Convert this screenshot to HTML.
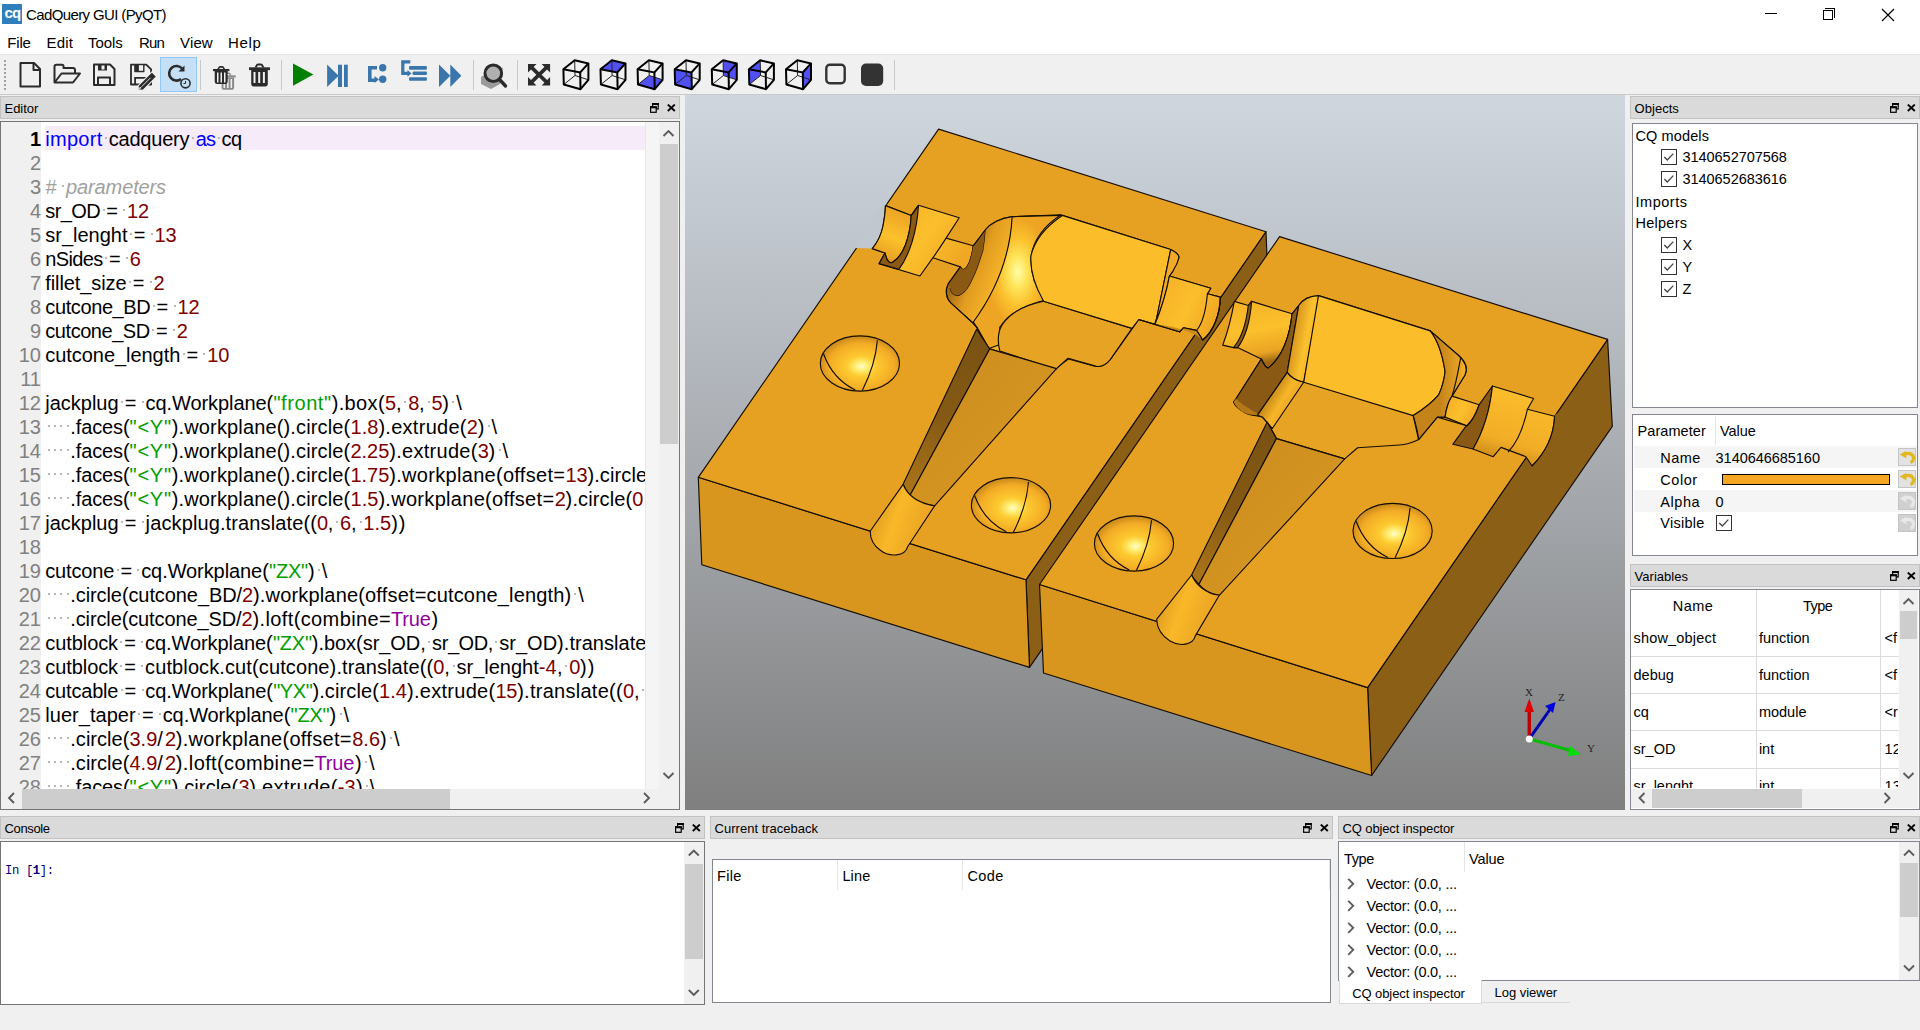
<!DOCTYPE html><html><head><meta charset="utf-8"><style>
*{margin:0;padding:0;box-sizing:border-box}
html,body{width:1920px;height:1030px;overflow:hidden;background:#f0f0f0;font-family:"Liberation Sans",sans-serif;color:#000}
.a{position:absolute}
.t{position:absolute;white-space:pre;font-size:14px;line-height:16px}
.dt{position:absolute;background:#dadada;border:1px solid #c2c2c2}
.dt .lbl{position:absolute;left:4px;top:2px;font-size:14px;white-space:pre}
.box{position:absolute;background:#fff;border:1px solid #828790}
.code{position:absolute;white-space:pre;font-size:20px;line-height:24px}
.ln{position:absolute;width:40px;text-align:right;font-size:20px;line-height:24px;color:#808080;left:0}
.kw{color:#0000ff}.num{color:#7f0000}.str{color:#00a000}.cm{color:#a0a0a0;font-style:italic}.tru{color:#9000a0}
.ws{color:#c8c8c8}
</style></head><body><div class="a" style="left:0;top:0;width:1920px;height:55px;background:#fff"></div><div class="a" style="left:0;top:54px;width:1920px;height:1px;background:#e3e3e3"></div><div class="a" style="left:2px;top:4px;width:20px;height:20px;background:#2f7fbd"></div><div class="t" style="left:4.5px;top:4px;font-size:15px;line-height:18px;font-weight:bold;color:#fff;letter-spacing:-0.8px">cq</div><div class="t" style="left:26.1px;top:7.3px;font-size:15px;line-height:15px;letter-spacing:-0.63px">CadQuery GUI (PyQT)</div><div class="a" style="left:1765px;top:13px;width:12px;height:1px;background:#000"></div><div class="a" style="left:1823px;top:10px;width:10px;height:10px;border:1px solid #000"></div><div class="a" style="left:1825px;top:8px;width:10px;height:10px;border-top:1px solid #000;border-right:1px solid #000"></div><svg class="a" style="left:1881px;top:8px" width="14" height="14"><path d="M1 1L13 13M13 1L1 13" stroke="#000" stroke-width="1.2"/></svg><div class="t" style="left:7.3px;top:35.1px;font-size:15px;line-height:15px;letter-spacing:-0.19px">File</div><div class="t" style="left:46.6px;top:35.1px;font-size:15px;line-height:15px;letter-spacing:0.17px">Edit</div><div class="t" style="left:88.1px;top:35.1px;font-size:15px;line-height:15px;letter-spacing:-0.08px">Tools</div><div class="t" style="left:139.1px;top:35.1px;font-size:15px;line-height:15px;letter-spacing:-0.83px">Run</div><div class="t" style="left:180.1px;top:35.1px;font-size:15px;line-height:15px;letter-spacing:0.11px">View</div><div class="t" style="left:228.1px;top:35.1px;font-size:15px;line-height:15px;letter-spacing:0.67px">Help</div><div class="a" style="left:0;top:94px;width:1920px;height:1px;background:#c9c9c9"></div><svg class="a" style="left:0;top:0" width="920" height="95"><rect x="4" y="60" width="2" height="2" fill="#a0a0a0"/><rect x="4" y="64" width="2" height="2" fill="#a0a0a0"/><rect x="4" y="68" width="2" height="2" fill="#a0a0a0"/><rect x="4" y="72" width="2" height="2" fill="#a0a0a0"/><rect x="4" y="76" width="2" height="2" fill="#a0a0a0"/><rect x="4" y="80" width="2" height="2" fill="#a0a0a0"/><rect x="4" y="84" width="2" height="2" fill="#a0a0a0"/><rect x="4" y="88" width="2" height="2" fill="#a0a0a0"/><rect x="160.5" y="57.5" width="36" height="34" fill="#c4dff6" stroke="#90c8f6" stroke-width="1"/><path d="M20.5,63 H34 L40,69 V86.5 H20.5 Z" stroke="#2b2b2b" stroke-width="2" fill="none" stroke-linejoin="round"/><path d="M33.5,63 V70 H40" stroke="#2b2b2b" stroke-width="2" fill="none" stroke-linejoin="round"/><path d="M54.5,82 V66.5 Q54.5,64.8 56.5,64.8 H62 Q63.5,64.8 63.5,66.5 V68 H73 Q75,68 75,70 V73.5" stroke="#2b2b2b" stroke-width="2" fill="none" stroke-linejoin="round"/><path d="M54.5,82.5 L61.5,73.5 H80 L73,82.5 Z" stroke="#2b2b2b" stroke-width="2" fill="none" stroke-linejoin="round"/><path d="M94,64.5 H110 L114.5,69 V85 H94 Z" stroke="#2b2b2b" stroke-width="2" fill="none" stroke-linejoin="round"/><rect x="98" y="64.5" width="9" height="6" fill="#2b2b2b"/><rect x="101.5" y="65.5" width="3" height="4" fill="#f0f0f0"/><path d="M98,85 V77.5 H110 V85" stroke="#2b2b2b" stroke-width="2" fill="none" stroke-linejoin="round"/><path d="M131,64.6 H146.3 L151.1,69.4 V84.5 H131 Z" stroke="#2b2b2b" stroke-width="1.8" fill="none" stroke-linejoin="round"/><rect x="134.2" y="64" width="10.3" height="8.3" rx="0.8" fill="#2b2b2b"/><rect x="138.9" y="65.2" width="4.2" height="5.6" fill="#f0f0f0"/><path d="M135.1,84.5 V77.8 H150" stroke="#2b2b2b" stroke-width="1.8" fill="none"/><path d="M138.2,89.8 L138.2,85.6 L151.9,71.9 L156.5,76.7 L142.9,90.3 Z" fill="#2b2b2b" stroke="#f0f0f0" stroke-width="1.1" stroke-linejoin="round"/><path d="M141.5,86.8 L150.5,77.8" stroke="#f0f0f0" stroke-width="0.9"/><path d="M139.3,88.8 L140.8,87.3" stroke="#f0f0f0" stroke-width="1.4"/><path d="M182,68.5 A7.3,7.3 0 1 0 181,79" stroke="#2b2b2b" stroke-width="2.6" fill="none"/><path d="M184.5,65.5 V71.5 H178.5 Z" fill="#2b2b2b"/><circle cx="185.5" cy="83.3" r="4.6" fill="#c4dff6" stroke="#2b2b2b" stroke-width="1.6"/><path d="M185.5,81 V83.5 H183.5" stroke="#2b2b2b" stroke-width="1" fill="none"/><rect x="200.0" y="60" width="1" height="30" fill="#c8c8c8"/><rect x="281.0" y="60" width="1" height="30" fill="#c8c8c8"/><rect x="473.0" y="60" width="1" height="30" fill="#c8c8c8"/><rect x="517.0" y="60" width="1" height="30" fill="#c8c8c8"/><rect x="894.0" y="60" width="1" height="30" fill="#c8c8c8"/><g transform="translate(220,72.5) scale(0.75)" fill="#8a8a8a"><path d="M0,3.8 H21 V6.6 H0 Z"/><path d="M5.5,4 L7.2,1 Q7.8,0 9.3,0 H11.7 Q13.2,0 13.8,1 L15.5,4 H13.2 L12.2,2.1 H8.8 L7.8,4 Z"/><path d="M2.2,6.5 H18.8 V20.3 Q18.8,23 16.2,23 H4.8 Q2.2,23 2.2,20.3 Z"/></g><g fill="#f0f0f0"><rect x="223.5" y="79" width="1.6" height="9"/><rect x="227" y="79" width="1.6" height="9"/><rect x="230.5" y="79" width="1.6" height="9"/></g><g transform="translate(213,66) scale(0.78)" fill="#2b2b2b"><path d="M0,3.8 H21 V6.6 H0 Z"/><path d="M5.5,4 L7.2,1 Q7.8,0 9.3,0 H11.7 Q13.2,0 13.8,1 L15.5,4 H13.2 L12.2,2.1 H8.8 L7.8,4 Z"/><path d="M2.2,6.5 H18.8 V20.3 Q18.8,23 16.2,23 H4.8 Q2.2,23 2.2,20.3 Z"/></g><g fill="#f0f0f0"><rect x="217" y="72.5" width="1.5" height="10"/><rect x="220.5" y="72.5" width="1.5" height="10"/><rect x="224" y="72.5" width="1.5" height="10"/></g><g transform="translate(249,63.5) scale(1.0)" fill="#2b2b2b"><path d="M0,3.8 H21 V6.6 H0 Z"/><path d="M5.5,4 L7.2,1 Q7.8,0 9.3,0 H11.7 Q13.2,0 13.8,1 L15.5,4 H13.2 L12.2,2.1 H8.8 L7.8,4 Z"/><path d="M2.2,6.5 H18.8 V20.3 Q18.8,23 16.2,23 H4.8 Q2.2,23 2.2,20.3 Z"/></g><g fill="#f0f0f0"><rect x="253.5" y="72" width="2" height="11"/><rect x="258.2" y="72" width="2" height="11"/><rect x="262.9" y="72" width="2" height="11"/></g><path d="M293,63.4 V85.8 L313.4,74.6 Z" fill="#008000"/><path d="M327.1,64.6 V87 L338.6,75.8 Z" fill="#3a76ab"/><rect x="338" y="64.7" width="4" height="22.3" fill="#3a76ab"/><rect x="344" y="64.7" width="3.8" height="22.3" fill="#3a76ab"/><path d="M377,67.8 H369.8 V80.2 H375" stroke="#3a76ab" stroke-width="3.6" fill="none"/><path d="M374.5,76 L379,79.5 L374.5,83 Z" fill="#3a76ab"/><circle cx="382.7" cy="67.7" r="3.7" fill="#3a76ab"/><circle cx="382.7" cy="79.2" r="3.7" fill="#3a76ab"/><path d="M410.3,61.8 H402.8 V73.4 H408" stroke="#3a76ab" stroke-width="3.2" fill="none"/><path d="M407.5,70 L411.5,73.4 L407.5,76.8 Z" fill="#3a76ab"/><rect x="409" y="66.1" width="17.9" height="3.6" rx="1" fill="#3a76ab"/><rect x="412.6" y="71.5" width="14.3" height="3.4" rx="1" fill="#3a76ab"/><rect x="409" y="77.2" width="17.9" height="3.5" rx="1" fill="#3a76ab"/><path d="M439,64.5 V86.9 L450.3,75.7 Z M450.3,64.5 V86.9 L461.4,75.7 Z" fill="#3a76ab"/><path d="M481,77 L489,72 L500,76 V84 L491,89 L481,84 Z" fill="#9a9a9a"/><path d="M487,68 L495,64 L503,68 V77 L495,81 L487,77 Z" fill="#b0b0b0"/><circle cx="493.3" cy="73.3" r="8.3" stroke="#2b2b2b" stroke-width="3" fill="none"/><path d="M499.5,79.5 L505.5,86" stroke="#2b2b2b" stroke-width="3.4" stroke-linecap="round"/><g fill="#2b2b2b"><path d="M528,63.9 H536.5 L528,72.4 Z M550.1,63.9 H541.6 L550.1,72.4 Z M528,85.6 H536.5 L528,77.1 Z M550.1,85.6 H541.6 L550.1,77.1 Z"/></g><path d="M531,66.9 L547.1,82.6 M547.1,66.9 L531,82.6" stroke="#2b2b2b" stroke-width="3.6"/><line x1="574.7" y1="60.3" x2="575.0" y2="75.5" stroke="#222" stroke-width="1"/><line x1="575.0" y1="75.5" x2="563.8" y2="84.5" stroke="#222" stroke-width="1"/><line x1="575.0" y1="75.5" x2="588.4" y2="79.8" stroke="#222" stroke-width="1"/><polygon points="574.7,60.3 588.4,63.4 588.4,79.8 580.5,89.2 563.8,84.5 563.4,69.3" fill="none" stroke="#000" stroke-width="2" stroke-linejoin="round"/><polyline points="563.4,69.3 580.2,72.4 588.4,63.4" fill="none" stroke="#000" stroke-width="2"/><line x1="580.2" y1="72.4" x2="580.5" y2="89.2" stroke="#000" stroke-width="2"/><polygon points="611.8,60.3 625.5,63.4 617.3,72.4 600.5,69.3" fill="#5050f5"/><line x1="611.8" y1="60.3" x2="612.1" y2="75.5" stroke="#222" stroke-width="1"/><line x1="612.1" y1="75.5" x2="600.9" y2="84.5" stroke="#222" stroke-width="1"/><line x1="612.1" y1="75.5" x2="625.5" y2="79.8" stroke="#222" stroke-width="1"/><polygon points="611.8,60.3 625.5,63.4 625.5,79.8 617.6,89.2 600.9,84.5 600.5,69.3" fill="none" stroke="#000" stroke-width="2" stroke-linejoin="round"/><polyline points="600.5,69.3 617.3,72.4 625.5,63.4" fill="none" stroke="#000" stroke-width="2"/><line x1="617.3" y1="72.4" x2="617.6" y2="89.2" stroke="#000" stroke-width="2"/><polygon points="649.2,75.5 662.6,79.8 654.7,89.2 638.0,84.5" fill="#5050f5"/><line x1="648.9" y1="60.3" x2="649.2" y2="75.5" stroke="#222" stroke-width="1"/><line x1="649.2" y1="75.5" x2="638.0" y2="84.5" stroke="#222" stroke-width="1"/><line x1="649.2" y1="75.5" x2="662.6" y2="79.8" stroke="#222" stroke-width="1"/><polygon points="648.9,60.3 662.6,63.4 662.6,79.8 654.7,89.2 638.0,84.5 637.6,69.3" fill="none" stroke="#000" stroke-width="2" stroke-linejoin="round"/><polyline points="637.6,69.3 654.4,72.4 662.6,63.4" fill="none" stroke="#000" stroke-width="2"/><line x1="654.4" y1="72.4" x2="654.7" y2="89.2" stroke="#000" stroke-width="2"/><polygon points="674.7,69.3 691.5,72.4 691.8,89.2 675.1,84.5" fill="#5050f5"/><line x1="686.0" y1="60.3" x2="686.3" y2="75.5" stroke="#222" stroke-width="1"/><line x1="686.3" y1="75.5" x2="675.1" y2="84.5" stroke="#222" stroke-width="1"/><line x1="686.3" y1="75.5" x2="699.7" y2="79.8" stroke="#222" stroke-width="1"/><polygon points="686.0,60.3 699.7,63.4 699.7,79.8 691.8,89.2 675.1,84.5 674.7,69.3" fill="none" stroke="#000" stroke-width="2" stroke-linejoin="round"/><polyline points="674.7,69.3 691.5,72.4 699.7,63.4" fill="none" stroke="#000" stroke-width="2"/><line x1="691.5" y1="72.4" x2="691.8" y2="89.2" stroke="#000" stroke-width="2"/><polygon points="723.1,60.3 736.8,63.4 736.8,79.8 723.4,75.5" fill="#5050f5"/><line x1="723.1" y1="60.3" x2="723.4" y2="75.5" stroke="#222" stroke-width="1"/><line x1="723.4" y1="75.5" x2="712.2" y2="84.5" stroke="#222" stroke-width="1"/><line x1="723.4" y1="75.5" x2="736.8" y2="79.8" stroke="#222" stroke-width="1"/><polygon points="723.1,60.3 736.8,63.4 736.8,79.8 728.9,89.2 712.2,84.5 711.8,69.3" fill="none" stroke="#000" stroke-width="2" stroke-linejoin="round"/><polyline points="711.8,69.3 728.6,72.4 736.8,63.4" fill="none" stroke="#000" stroke-width="2"/><line x1="728.6" y1="72.4" x2="728.9" y2="89.2" stroke="#000" stroke-width="2"/><polygon points="748.9,69.3 760.2,60.3 760.5,75.5 749.3,84.5" fill="#5050f5"/><line x1="760.2" y1="60.3" x2="760.5" y2="75.5" stroke="#222" stroke-width="1"/><line x1="760.5" y1="75.5" x2="749.3" y2="84.5" stroke="#222" stroke-width="1"/><line x1="760.5" y1="75.5" x2="773.9" y2="79.8" stroke="#222" stroke-width="1"/><polygon points="760.2,60.3 773.9,63.4 773.9,79.8 766.0,89.2 749.3,84.5 748.9,69.3" fill="none" stroke="#000" stroke-width="2" stroke-linejoin="round"/><polyline points="748.9,69.3 765.7,72.4 773.9,63.4" fill="none" stroke="#000" stroke-width="2"/><line x1="765.7" y1="72.4" x2="766.0" y2="89.2" stroke="#000" stroke-width="2"/><polygon points="802.8,72.4 811.0,63.4 811.0,79.8 803.1,89.2" fill="#5050f5"/><line x1="797.3" y1="60.3" x2="797.6" y2="75.5" stroke="#222" stroke-width="1"/><line x1="797.6" y1="75.5" x2="786.4" y2="84.5" stroke="#222" stroke-width="1"/><line x1="797.6" y1="75.5" x2="811.0" y2="79.8" stroke="#222" stroke-width="1"/><polygon points="797.3,60.3 811.0,63.4 811.0,79.8 803.1,89.2 786.4,84.5 786.0,69.3" fill="none" stroke="#000" stroke-width="2" stroke-linejoin="round"/><polyline points="786.0,69.3 802.8,72.4 811.0,63.4" fill="none" stroke="#000" stroke-width="2"/><line x1="802.8" y1="72.4" x2="803.1" y2="89.2" stroke="#000" stroke-width="2"/><rect x="826.3" y="64.8" width="18.4" height="18.4" rx="3.5" fill="none" stroke="#333" stroke-width="2.4"/><rect x="861" y="63.5" width="22.2" height="22.5" rx="5" fill="#333"/></svg><div class="dt" style="left:0px;top:96px;width:680px;height:23px"></div><div class="t" style="left:4.6px;top:102.0px;font-size:13px;line-height:13px;letter-spacing:-0.06px">Editor</div><svg class="a" style="left:650px;top:102.5px" width="9" height="10"><rect x="2.6" y="0.6" width="5.6" height="5.4" fill="none" stroke="#000" stroke-width="1.2"/><rect x="2" y="0" width="6.8" height="2" fill="#000"/><rect x="0.6" y="3.9" width="5.6" height="5.4" fill="#dadada" stroke="#000" stroke-width="1.2"/><rect x="0" y="3.3" width="6.8" height="2" fill="#000"/></svg><svg class="a" style="left:666.6px;top:103.6px" width="9" height="8"><path d="M0.8,0.6 L7.8,7 M7.8,0.6 L0.8,7" stroke="#000" stroke-width="1.9"/></svg><div class="box" style="left:0;top:121px;width:680px;height:689px;overflow:hidden;border-color:#747474"><div class="a" style="left:0;top:0;width:40px;height:667px;background:#f0f0f0"></div><div class="a" style="left:44px;top:4px;width:600px;height:24px;background:#f6ebf8"></div><div class="ln" style="top:5px;color:#000;font-weight:bold">1</div><div class="code" style="left:44.3px;top:5px;color:#0000ff;letter-spacing:0.27px">import</div><div class="a" style="left:103.9px;top:15px;width:2px;height:2px;background:#b8b8b8"></div><div class="code" style="left:107.7px;top:5px;color:#000;letter-spacing:-0.20px">cadquery</div><div class="a" style="left:190.8px;top:15px;width:2px;height:2px;background:#b8b8b8"></div><div class="code" style="left:194.7px;top:5px;color:#0000ff;letter-spacing:-0.85px">as</div><div class="a" style="left:216.5px;top:15px;width:2px;height:2px;background:#b8b8b8"></div><div class="code" style="left:220.4px;top:5px;color:#000;letter-spacing:-0.42px">cq</div><div class="ln" style="top:29px;">2</div><div class="ln" style="top:53px;">3</div><div class="code" style="left:44.3px;top:53px;color:#a0a0a0;letter-spacing:3.44px;font-style:italic">#</div><div class="a" style="left:61.3px;top:63px;width:2px;height:2px;background:#b8b8b8"></div><div class="code" style="left:65.1px;top:53px;color:#a0a0a0;letter-spacing:-0.13px;font-style:italic">parameters</div><div class="ln" style="top:77px;">4</div><div class="code" style="left:44.3px;top:77px;color:#000;letter-spacing:-0.60px">sr_OD</div><div class="a" style="left:101.5px;top:87px;width:2px;height:2px;background:#b8b8b8"></div><div class="code" style="left:105.3px;top:77px;color:#000;letter-spacing:2.88px">=</div><div class="a" style="left:122.3px;top:87px;width:2px;height:2px;background:#b8b8b8"></div><div class="code" style="left:126.1px;top:77px;color:#7f0000;letter-spacing:-0.20px">12</div><div class="ln" style="top:101px;">5</div><div class="code" style="left:44.3px;top:101px;color:#000;letter-spacing:-0.01px">sr_lenght</div><div class="a" style="left:128.9px;top:111px;width:2px;height:2px;background:#b8b8b8"></div><div class="code" style="left:132.8px;top:101px;color:#000;letter-spacing:2.88px">=</div><div class="a" style="left:149.7px;top:111px;width:2px;height:2px;background:#b8b8b8"></div><div class="code" style="left:153.6px;top:101px;color:#7f0000;letter-spacing:-0.20px">13</div><div class="ln" style="top:125px;">6</div><div class="code" style="left:44.3px;top:125px;color:#000;letter-spacing:-0.63px">nSides</div><div class="a" style="left:104.1px;top:135px;width:2px;height:2px;background:#b8b8b8"></div><div class="code" style="left:107.9px;top:125px;color:#000;letter-spacing:2.88px">=</div><div class="a" style="left:124.9px;top:135px;width:2px;height:2px;background:#b8b8b8"></div><div class="code" style="left:128.8px;top:125px;color:#7f0000;letter-spacing:-0.20px">6</div><div class="ln" style="top:149px;">7</div><div class="code" style="left:44.3px;top:149px;color:#000;letter-spacing:-0.10px">fillet_size</div><div class="a" style="left:127.8px;top:159px;width:2px;height:2px;background:#b8b8b8"></div><div class="code" style="left:131.7px;top:149px;color:#000;letter-spacing:2.88px">=</div><div class="a" style="left:148.6px;top:159px;width:2px;height:2px;background:#b8b8b8"></div><div class="code" style="left:152.5px;top:149px;color:#7f0000;letter-spacing:-0.20px">2</div><div class="ln" style="top:173px;">8</div><div class="code" style="left:44.3px;top:173px;color:#000;letter-spacing:-0.39px">cutcone_BD</div><div class="a" style="left:151.8px;top:183px;width:2px;height:2px;background:#b8b8b8"></div><div class="code" style="left:155.6px;top:173px;color:#000;letter-spacing:2.88px">=</div><div class="a" style="left:172.6px;top:183px;width:2px;height:2px;background:#b8b8b8"></div><div class="code" style="left:176.5px;top:173px;color:#7f0000;letter-spacing:-0.20px">12</div><div class="ln" style="top:197px;">9</div><div class="code" style="left:44.3px;top:197px;color:#000;letter-spacing:-0.45px">cutcone_SD</div><div class="a" style="left:151.1px;top:207px;width:2px;height:2px;background:#b8b8b8"></div><div class="code" style="left:155.0px;top:197px;color:#000;letter-spacing:2.88px">=</div><div class="a" style="left:172.0px;top:207px;width:2px;height:2px;background:#b8b8b8"></div><div class="code" style="left:175.8px;top:197px;color:#7f0000;letter-spacing:-0.20px">2</div><div class="ln" style="top:221px;">10</div><div class="code" style="left:44.3px;top:221px;color:#000;letter-spacing:-0.05px">cutcone_length</div><div class="a" style="left:181.6px;top:231px;width:2px;height:2px;background:#b8b8b8"></div><div class="code" style="left:185.5px;top:221px;color:#000;letter-spacing:2.88px">=</div><div class="a" style="left:202.4px;top:231px;width:2px;height:2px;background:#b8b8b8"></div><div class="code" style="left:206.3px;top:221px;color:#7f0000;letter-spacing:-0.20px">10</div><div class="ln" style="top:245px;">11</div><div class="ln" style="top:269px;">12</div><div class="code" style="left:44.3px;top:269px;color:#000;letter-spacing:-0.02px">jackplug</div><div class="a" style="left:119.9px;top:279px;width:2px;height:2px;background:#b8b8b8"></div><div class="code" style="left:123.7px;top:269px;color:#000;letter-spacing:2.88px">=</div><div class="a" style="left:140.7px;top:279px;width:2px;height:2px;background:#b8b8b8"></div><div class="code" style="left:144.6px;top:269px;color:#000;letter-spacing:-0.08px">cq.Workplane(</div><div class="code" style="left:272.4px;top:269px;color:#00a000;letter-spacing:0.58px">&quot;front&quot;</div><div class="code" style="left:330.7px;top:269px;color:#000;letter-spacing:0.35px">).box(</div><div class="code" style="left:383.9px;top:269px;color:#7f0000;letter-spacing:-0.20px">5</div><div class="code" style="left:394.9px;top:269px;color:#000;letter-spacing:0.50px">,</div><div class="a" style="left:403.3px;top:279px;width:2px;height:2px;background:#b8b8b8"></div><div class="code" style="left:407.2px;top:269px;color:#7f0000;letter-spacing:-0.20px">8</div><div class="code" style="left:418.1px;top:269px;color:#000;letter-spacing:0.50px">,</div><div class="a" style="left:426.6px;top:279px;width:2px;height:2px;background:#b8b8b8"></div><div class="code" style="left:430.4px;top:269px;color:#7f0000;letter-spacing:-0.20px">5</div><div class="code" style="left:441.3px;top:269px;color:#000;letter-spacing:1.00px">)</div><div class="a" style="left:451.4px;top:279px;width:2px;height:2px;background:#b8b8b8"></div><div class="code" style="left:455.3px;top:269px;color:#000;letter-spacing:2.08px">\</div><div class="ln" style="top:293px;">13</div><div class="a" style="left:46.7px;top:303px;width:2px;height:2px;background:#b8b8b8"></div><div class="a" style="left:53.0px;top:303px;width:2px;height:2px;background:#b8b8b8"></div><div class="a" style="left:59.2px;top:303px;width:2px;height:2px;background:#b8b8b8"></div><div class="a" style="left:65.5px;top:303px;width:2px;height:2px;background:#b8b8b8"></div><div class="code" style="left:69.3px;top:293px;color:#000;letter-spacing:-0.11px">.faces(</div><div class="code" style="left:128.6px;top:293px;color:#00a000;letter-spacing:0.73px">&quot;&lt;Y&quot;</div><div class="code" style="left:170.7px;top:293px;color:#000;letter-spacing:0.15px">).workplane().circle(</div><div class="code" style="left:349.5px;top:293px;color:#7f0000;letter-spacing:0.03px">1.8</div><div class="code" style="left:377.4px;top:293px;color:#000;letter-spacing:0.28px">).extrude(</div><div class="code" style="left:465.8px;top:293px;color:#7f0000;letter-spacing:-0.20px">2</div><div class="code" style="left:476.7px;top:293px;color:#000;letter-spacing:1.00px">)</div><div class="a" style="left:486.8px;top:303px;width:2px;height:2px;background:#b8b8b8"></div><div class="code" style="left:490.6px;top:293px;color:#000;letter-spacing:2.08px">\</div><div class="ln" style="top:317px;">14</div><div class="a" style="left:46.7px;top:327px;width:2px;height:2px;background:#b8b8b8"></div><div class="a" style="left:53.0px;top:327px;width:2px;height:2px;background:#b8b8b8"></div><div class="a" style="left:59.2px;top:327px;width:2px;height:2px;background:#b8b8b8"></div><div class="a" style="left:65.5px;top:327px;width:2px;height:2px;background:#b8b8b8"></div><div class="code" style="left:69.3px;top:317px;color:#000;letter-spacing:-0.11px">.faces(</div><div class="code" style="left:128.6px;top:317px;color:#00a000;letter-spacing:0.73px">&quot;&lt;Y&quot;</div><div class="code" style="left:170.7px;top:317px;color:#000;letter-spacing:0.15px">).workplane().circle(</div><div class="code" style="left:349.5px;top:317px;color:#7f0000;letter-spacing:-0.03px">2.25</div><div class="code" style="left:388.3px;top:317px;color:#000;letter-spacing:0.28px">).extrude(</div><div class="code" style="left:476.7px;top:317px;color:#7f0000;letter-spacing:-0.20px">3</div><div class="code" style="left:487.6px;top:317px;color:#000;letter-spacing:1.00px">)</div><div class="a" style="left:497.7px;top:327px;width:2px;height:2px;background:#b8b8b8"></div><div class="code" style="left:501.5px;top:317px;color:#000;letter-spacing:2.08px">\</div><div class="ln" style="top:341px;">15</div><div class="a" style="left:46.7px;top:351px;width:2px;height:2px;background:#b8b8b8"></div><div class="a" style="left:53.0px;top:351px;width:2px;height:2px;background:#b8b8b8"></div><div class="a" style="left:59.2px;top:351px;width:2px;height:2px;background:#b8b8b8"></div><div class="a" style="left:65.5px;top:351px;width:2px;height:2px;background:#b8b8b8"></div><div class="code" style="left:69.3px;top:341px;color:#000;letter-spacing:-0.11px">.faces(</div><div class="code" style="left:128.6px;top:341px;color:#00a000;letter-spacing:0.73px">&quot;&lt;Y&quot;</div><div class="code" style="left:170.7px;top:341px;color:#000;letter-spacing:0.15px">).workplane().circle(</div><div class="code" style="left:349.5px;top:341px;color:#7f0000;letter-spacing:-0.03px">1.75</div><div class="code" style="left:388.3px;top:341px;color:#000;letter-spacing:0.30px">).workplane(offset=</div><div class="code" style="left:564.6px;top:341px;color:#7f0000;letter-spacing:-0.20px">13</div><div class="code" style="left:586.4px;top:341px;color:#000;letter-spacing:0.13px">).circle(</div><div class="code" style="left:653.1px;top:341px;color:#7f0000;letter-spacing:-0.20px">2</div><div class="code" style="left:664.1px;top:341px;color:#000;letter-spacing:0.28px">).extrude(</div><div class="code" style="left:752.5px;top:341px;color:#7f0000;letter-spacing:-0.20px">2</div><div class="code" style="left:763.4px;top:341px;color:#000;letter-spacing:1.00px">)</div><div class="a" style="left:773.5px;top:351px;width:2px;height:2px;background:#b8b8b8"></div><div class="code" style="left:777.3px;top:341px;color:#000;letter-spacing:2.08px">\</div><div class="ln" style="top:365px;">16</div><div class="a" style="left:46.7px;top:375px;width:2px;height:2px;background:#b8b8b8"></div><div class="a" style="left:53.0px;top:375px;width:2px;height:2px;background:#b8b8b8"></div><div class="a" style="left:59.2px;top:375px;width:2px;height:2px;background:#b8b8b8"></div><div class="a" style="left:65.5px;top:375px;width:2px;height:2px;background:#b8b8b8"></div><div class="code" style="left:69.3px;top:365px;color:#000;letter-spacing:-0.11px">.faces(</div><div class="code" style="left:128.6px;top:365px;color:#00a000;letter-spacing:0.73px">&quot;&lt;Y&quot;</div><div class="code" style="left:170.7px;top:365px;color:#000;letter-spacing:0.15px">).workplane().circle(</div><div class="code" style="left:349.5px;top:365px;color:#7f0000;letter-spacing:0.03px">1.5</div><div class="code" style="left:377.4px;top:365px;color:#000;letter-spacing:0.30px">).workplane(offset=</div><div class="code" style="left:553.7px;top:365px;color:#7f0000;letter-spacing:-0.20px">2</div><div class="code" style="left:564.6px;top:365px;color:#000;letter-spacing:0.13px">).circle(</div><div class="code" style="left:631.3px;top:365px;color:#7f0000;letter-spacing:0.03px">0.5</div><div class="code" style="left:659.2px;top:365px;color:#000;letter-spacing:1.00px">)</div><div class="a" style="left:669.3px;top:375px;width:2px;height:2px;background:#b8b8b8"></div><div class="code" style="left:673.1px;top:365px;color:#000;letter-spacing:2.08px">\</div><div class="ln" style="top:389px;">17</div><div class="code" style="left:44.3px;top:389px;color:#000;letter-spacing:-0.02px">jackplug</div><div class="a" style="left:119.9px;top:399px;width:2px;height:2px;background:#b8b8b8"></div><div class="code" style="left:123.7px;top:389px;color:#000;letter-spacing:2.88px">=</div><div class="a" style="left:140.7px;top:399px;width:2px;height:2px;background:#b8b8b8"></div><div class="code" style="left:144.6px;top:389px;color:#000;letter-spacing:0.12px">jackplug.translate((</div><div class="code" style="left:315.9px;top:389px;color:#7f0000;letter-spacing:-0.20px">0</div><div class="code" style="left:326.8px;top:389px;color:#000;letter-spacing:0.50px">,</div><div class="a" style="left:335.2px;top:399px;width:2px;height:2px;background:#b8b8b8"></div><div class="code" style="left:339.1px;top:389px;color:#7f0000;letter-spacing:-0.20px">6</div><div class="code" style="left:350.0px;top:389px;color:#000;letter-spacing:0.50px">,</div><div class="a" style="left:358.5px;top:399px;width:2px;height:2px;background:#b8b8b8"></div><div class="code" style="left:362.3px;top:389px;color:#7f0000;letter-spacing:0.03px">1.5</div><div class="code" style="left:390.2px;top:389px;color:#000;letter-spacing:1.00px">))</div><div class="ln" style="top:413px;">18</div><div class="ln" style="top:437px;">19</div><div class="code" style="left:44.3px;top:437px;color:#000;letter-spacing:-0.18px">cutcone</div><div class="a" style="left:115.5px;top:447px;width:2px;height:2px;background:#b8b8b8"></div><div class="code" style="left:119.4px;top:437px;color:#000;letter-spacing:2.88px">=</div><div class="a" style="left:136.3px;top:447px;width:2px;height:2px;background:#b8b8b8"></div><div class="code" style="left:140.2px;top:437px;color:#000;letter-spacing:-0.08px">cq.Workplane(</div><div class="code" style="left:268.1px;top:437px;color:#00a000;letter-spacing:-0.23px">&quot;ZX&quot;</div><div class="code" style="left:306.9px;top:437px;color:#000;letter-spacing:1.00px">)</div><div class="a" style="left:317.0px;top:447px;width:2px;height:2px;background:#b8b8b8"></div><div class="code" style="left:320.8px;top:437px;color:#000;letter-spacing:2.08px">\</div><div class="ln" style="top:461px;">20</div><div class="a" style="left:46.7px;top:471px;width:2px;height:2px;background:#b8b8b8"></div><div class="a" style="left:53.0px;top:471px;width:2px;height:2px;background:#b8b8b8"></div><div class="a" style="left:59.2px;top:471px;width:2px;height:2px;background:#b8b8b8"></div><div class="a" style="left:65.5px;top:471px;width:2px;height:2px;background:#b8b8b8"></div><div class="code" style="left:69.3px;top:461px;color:#000;letter-spacing:-0.09px">.circle(cutcone_BD/</div><div class="code" style="left:241.1px;top:461px;color:#7f0000;letter-spacing:-0.20px">2</div><div class="code" style="left:252.0px;top:461px;color:#000;letter-spacing:0.17px">).workplane(offset=cutcone_length)</div><div class="a" style="left:573.3px;top:471px;width:2px;height:2px;background:#b8b8b8"></div><div class="code" style="left:577.2px;top:461px;color:#000;letter-spacing:2.08px">\</div><div class="ln" style="top:485px;">21</div><div class="a" style="left:46.7px;top:495px;width:2px;height:2px;background:#b8b8b8"></div><div class="a" style="left:53.0px;top:495px;width:2px;height:2px;background:#b8b8b8"></div><div class="a" style="left:59.2px;top:495px;width:2px;height:2px;background:#b8b8b8"></div><div class="a" style="left:65.5px;top:495px;width:2px;height:2px;background:#b8b8b8"></div><div class="code" style="left:69.3px;top:485px;color:#000;letter-spacing:-0.12px">.circle(cutcone_SD/</div><div class="code" style="left:240.5px;top:485px;color:#7f0000;letter-spacing:-0.20px">2</div><div class="code" style="left:251.4px;top:485px;color:#000;letter-spacing:0.39px">).loft(combine=</div><div class="code" style="left:390.0px;top:485px;color:#9000a0;letter-spacing:-0.14px">True</div><div class="code" style="left:430.6px;top:485px;color:#000;letter-spacing:1.00px">)</div><div class="ln" style="top:509px;">22</div><div class="code" style="left:44.3px;top:509px;color:#000;letter-spacing:-0.08px">cutblock</div><div class="a" style="left:119.4px;top:519px;width:2px;height:2px;background:#b8b8b8"></div><div class="code" style="left:123.3px;top:509px;color:#000;letter-spacing:2.88px">=</div><div class="a" style="left:140.3px;top:519px;width:2px;height:2px;background:#b8b8b8"></div><div class="code" style="left:144.1px;top:509px;color:#000;letter-spacing:-0.08px">cq.Workplane(</div><div class="code" style="left:272.0px;top:509px;color:#00a000;letter-spacing:-0.23px">&quot;ZX&quot;</div><div class="code" style="left:310.8px;top:509px;color:#000;letter-spacing:-0.04px">).box(sr_OD,</div><div class="a" style="left:427.3px;top:519px;width:2px;height:2px;background:#b8b8b8"></div><div class="code" style="left:431.1px;top:509px;color:#000;letter-spacing:-0.42px">sr_OD,</div><div class="a" style="left:494.3px;top:519px;width:2px;height:2px;background:#b8b8b8"></div><div class="code" style="left:498.2px;top:509px;color:#000;letter-spacing:0.03px">sr_OD).translate((</div><div class="code" style="left:658.7px;top:509px;color:#7f0000;letter-spacing:-0.20px">0</div><div class="code" style="left:669.7px;top:509px;color:#000;letter-spacing:0.50px">,</div><div class="a" style="left:678.1px;top:519px;width:2px;height:2px;background:#b8b8b8"></div><div class="code" style="left:682.0px;top:509px;color:#7f0000;letter-spacing:-0.20px">0</div><div class="code" style="left:692.9px;top:509px;color:#000;letter-spacing:0.50px">,</div><div class="a" style="left:701.4px;top:519px;width:2px;height:2px;background:#b8b8b8"></div><div class="code" style="left:705.2px;top:509px;color:#7f0000;letter-spacing:-0.20px">0</div><div class="code" style="left:716.1px;top:509px;color:#000;letter-spacing:1.00px">))</div><div class="ln" style="top:533px;">23</div><div class="code" style="left:44.3px;top:533px;color:#000;letter-spacing:-0.08px">cutblock</div><div class="a" style="left:119.4px;top:543px;width:2px;height:2px;background:#b8b8b8"></div><div class="code" style="left:123.3px;top:533px;color:#000;letter-spacing:2.88px">=</div><div class="a" style="left:140.3px;top:543px;width:2px;height:2px;background:#b8b8b8"></div><div class="code" style="left:144.1px;top:533px;color:#000;letter-spacing:0.11px">cutblock.cut(cutcone).translate((</div><div class="code" style="left:432.2px;top:533px;color:#7f0000;letter-spacing:-0.20px">0</div><div class="code" style="left:443.2px;top:533px;color:#000;letter-spacing:0.50px">,</div><div class="a" style="left:451.6px;top:543px;width:2px;height:2px;background:#b8b8b8"></div><div class="code" style="left:455.5px;top:533px;color:#000;letter-spacing:-0.01px">sr_lenght</div><div class="code" style="left:537.7px;top:533px;color:#7f0000;letter-spacing:0.20px">-4</div><div class="code" style="left:555.9px;top:533px;color:#000;letter-spacing:0.50px">,</div><div class="a" style="left:564.3px;top:543px;width:2px;height:2px;background:#b8b8b8"></div><div class="code" style="left:568.2px;top:533px;color:#7f0000;letter-spacing:-0.20px">0</div><div class="code" style="left:579.1px;top:533px;color:#000;letter-spacing:1.00px">))</div><div class="ln" style="top:557px;">24</div><div class="code" style="left:44.3px;top:557px;color:#000;letter-spacing:-0.19px">cutcable</div><div class="a" style="left:119.6px;top:567px;width:2px;height:2px;background:#b8b8b8"></div><div class="code" style="left:123.5px;top:557px;color:#000;letter-spacing:2.88px">=</div><div class="a" style="left:140.5px;top:567px;width:2px;height:2px;background:#b8b8b8"></div><div class="code" style="left:144.3px;top:557px;color:#000;letter-spacing:-0.08px">cq.Workplane(</div><div class="code" style="left:272.2px;top:557px;color:#00a000;letter-spacing:-0.42px">&quot;YX&quot;</div><div class="code" style="left:311.4px;top:557px;color:#000;letter-spacing:0.13px">).circle(</div><div class="code" style="left:378.1px;top:557px;color:#7f0000;letter-spacing:0.03px">1.4</div><div class="code" style="left:406.0px;top:557px;color:#000;letter-spacing:0.28px">).extrude(</div><div class="code" style="left:494.4px;top:557px;color:#7f0000;letter-spacing:-0.20px">15</div><div class="code" style="left:516.2px;top:557px;color:#000;letter-spacing:0.27px">).translate((</div><div class="code" style="left:622.0px;top:557px;color:#7f0000;letter-spacing:-0.20px">0</div><div class="code" style="left:632.9px;top:557px;color:#000;letter-spacing:0.50px">,</div><div class="a" style="left:641.4px;top:567px;width:2px;height:2px;background:#b8b8b8"></div><div class="code" style="left:645.3px;top:557px;color:#7f0000;letter-spacing:-0.20px">0</div><div class="code" style="left:656.2px;top:557px;color:#000;letter-spacing:0.50px">,</div><div class="a" style="left:664.6px;top:567px;width:2px;height:2px;background:#b8b8b8"></div><div class="code" style="left:668.5px;top:557px;color:#7f0000;letter-spacing:-0.20px">0</div><div class="code" style="left:679.4px;top:557px;color:#000;letter-spacing:1.00px">))</div><div class="ln" style="top:581px;">25</div><div class="code" style="left:44.3px;top:581px;color:#000;letter-spacing:0.03px">luer_taper</div><div class="a" style="left:137.0px;top:591px;width:2px;height:2px;background:#b8b8b8"></div><div class="code" style="left:140.9px;top:581px;color:#000;letter-spacing:2.88px">=</div><div class="a" style="left:157.9px;top:591px;width:2px;height:2px;background:#b8b8b8"></div><div class="code" style="left:161.7px;top:581px;color:#000;letter-spacing:-0.08px">cq.Workplane(</div><div class="code" style="left:289.6px;top:581px;color:#00a000;letter-spacing:-0.23px">&quot;ZX&quot;</div><div class="code" style="left:328.4px;top:581px;color:#000;letter-spacing:1.00px">)</div><div class="a" style="left:338.5px;top:591px;width:2px;height:2px;background:#b8b8b8"></div><div class="code" style="left:342.4px;top:581px;color:#000;letter-spacing:2.08px">\</div><div class="ln" style="top:605px;">26</div><div class="a" style="left:46.7px;top:615px;width:2px;height:2px;background:#b8b8b8"></div><div class="a" style="left:53.0px;top:615px;width:2px;height:2px;background:#b8b8b8"></div><div class="a" style="left:59.2px;top:615px;width:2px;height:2px;background:#b8b8b8"></div><div class="a" style="left:65.5px;top:615px;width:2px;height:2px;background:#b8b8b8"></div><div class="code" style="left:69.3px;top:605px;color:#000;letter-spacing:0.02px">.circle(</div><div class="code" style="left:128.4px;top:605px;color:#7f0000;letter-spacing:0.03px">3.9</div><div class="code" style="left:156.3px;top:605px;color:#000;letter-spacing:2.08px">/</div><div class="code" style="left:163.9px;top:605px;color:#7f0000;letter-spacing:-0.20px">2</div><div class="code" style="left:174.8px;top:605px;color:#000;letter-spacing:0.30px">).workplane(offset=</div><div class="code" style="left:351.2px;top:605px;color:#7f0000;letter-spacing:0.03px">8.6</div><div class="code" style="left:379.1px;top:605px;color:#000;letter-spacing:1.00px">)</div><div class="a" style="left:389.1px;top:615px;width:2px;height:2px;background:#b8b8b8"></div><div class="code" style="left:393.0px;top:605px;color:#000;letter-spacing:2.08px">\</div><div class="ln" style="top:629px;">27</div><div class="a" style="left:46.7px;top:639px;width:2px;height:2px;background:#b8b8b8"></div><div class="a" style="left:53.0px;top:639px;width:2px;height:2px;background:#b8b8b8"></div><div class="a" style="left:59.2px;top:639px;width:2px;height:2px;background:#b8b8b8"></div><div class="a" style="left:65.5px;top:639px;width:2px;height:2px;background:#b8b8b8"></div><div class="code" style="left:69.3px;top:629px;color:#000;letter-spacing:0.02px">.circle(</div><div class="code" style="left:128.4px;top:629px;color:#7f0000;letter-spacing:0.03px">4.9</div><div class="code" style="left:156.3px;top:629px;color:#000;letter-spacing:2.08px">/</div><div class="code" style="left:163.9px;top:629px;color:#7f0000;letter-spacing:-0.20px">2</div><div class="code" style="left:174.8px;top:629px;color:#000;letter-spacing:0.39px">).loft(combine=</div><div class="code" style="left:313.5px;top:629px;color:#9000a0;letter-spacing:-0.14px">True</div><div class="code" style="left:354.0px;top:629px;color:#000;letter-spacing:1.00px">)</div><div class="a" style="left:364.1px;top:639px;width:2px;height:2px;background:#b8b8b8"></div><div class="code" style="left:367.9px;top:629px;color:#000;letter-spacing:2.08px">\</div><div class="ln" style="top:653px;">28</div><div class="a" style="left:46.7px;top:663px;width:2px;height:2px;background:#b8b8b8"></div><div class="a" style="left:53.0px;top:663px;width:2px;height:2px;background:#b8b8b8"></div><div class="a" style="left:59.2px;top:663px;width:2px;height:2px;background:#b8b8b8"></div><div class="a" style="left:65.5px;top:663px;width:2px;height:2px;background:#b8b8b8"></div><div class="code" style="left:69.3px;top:653px;color:#000;letter-spacing:-0.11px">.faces(</div><div class="code" style="left:128.6px;top:653px;color:#00a000;letter-spacing:0.73px">&quot;&lt;Y&quot;</div><div class="code" style="left:170.7px;top:653px;color:#000;letter-spacing:0.13px">).circle(</div><div class="code" style="left:237.4px;top:653px;color:#7f0000;letter-spacing:-0.20px">3</div><div class="code" style="left:248.3px;top:653px;color:#000;letter-spacing:0.28px">).extrude(</div><div class="code" style="left:336.7px;top:653px;color:#7f0000;letter-spacing:0.20px">-3</div><div class="code" style="left:354.9px;top:653px;color:#000;letter-spacing:1.00px">)</div><div class="a" style="left:365.0px;top:663px;width:2px;height:2px;background:#b8b8b8"></div><div class="code" style="left:368.8px;top:653px;color:#000;letter-spacing:2.08px">\</div><div class="a" style="left:644px;top:0;width:14px;height:667px;background:#f5f5f5;border-left:1px solid #e8e8e8"></div><div class="a" style="left:658px;top:0;width:20px;height:667px;background:#f0f0f0"></div><div class="a" style="left:659px;top:22px;width:18px;height:300px;background:#cdcdcd"></div><div class="a" style="left:0;top:667px;width:658px;height:20px;background:#f0f0f0"></div><div class="a" style="left:21px;top:667px;width:428px;height:20px;background:#cdcdcd"></div><div class="a" style="left:658px;top:667px;width:20px;height:20px;background:#f0f0f0"></div></div><div class="dt" style="left:1630px;top:96px;width:290px;height:23px"></div><div class="t" style="left:1634.6px;top:102.0px;font-size:13px;line-height:13px;letter-spacing:0.02px">Objects</div><svg class="a" style="left:1890px;top:102.5px" width="9" height="10"><rect x="2.6" y="0.6" width="5.6" height="5.4" fill="none" stroke="#000" stroke-width="1.2"/><rect x="2" y="0" width="6.8" height="2" fill="#000"/><rect x="0.6" y="3.9" width="5.6" height="5.4" fill="#dadada" stroke="#000" stroke-width="1.2"/><rect x="0" y="3.3" width="6.8" height="2" fill="#000"/></svg><svg class="a" style="left:1906.6px;top:103.6px" width="9" height="8"><path d="M0.8,0.6 L7.8,7 M7.8,0.6 L0.8,7" stroke="#000" stroke-width="1.9"/></svg><div class="box" style="left:1632px;top:123px;width:286px;height:285px"></div><div class="t" style="left:1635.5px;top:128.6px;font-size:14.5px;line-height:14.5px;letter-spacing:0.11px">CQ models</div><div class="t" style="left:1682.5px;top:150.4px;font-size:14.5px;line-height:14.5px;letter-spacing:-0.04px">3140652707568</div><div class="a" style="left:1661.1px;top:149.2px;width:15.7px;height:15.7px;border:1.2px solid #333;background:#fff"></div><svg class="a" style="left:1661.1px;top:149.2px" width="16" height="16"><path d="M3.3,8 L6.3,11 L12.3,4.6" stroke="#444" stroke-width="1.3" fill="none"/></svg><div class="t" style="left:1682.5px;top:172.3px;font-size:14.5px;line-height:14.5px;letter-spacing:-0.04px">3140652683616</div><div class="a" style="left:1661.1px;top:171.1px;width:15.7px;height:15.7px;border:1.2px solid #333;background:#fff"></div><svg class="a" style="left:1661.1px;top:171.1px" width="16" height="16"><path d="M3.3,8 L6.3,11 L12.3,4.6" stroke="#444" stroke-width="1.3" fill="none"/></svg><div class="t" style="left:1635.5px;top:194.6px;font-size:14.5px;line-height:14.5px;letter-spacing:0.53px">Imports</div><div class="t" style="left:1635.5px;top:216.4px;font-size:14.5px;line-height:14.5px;letter-spacing:0.26px">Helpers</div><div class="t" style="left:1682.5px;top:238.3px;font-size:14.5px;line-height:14.5px;letter-spacing:0.00px">X</div><div class="a" style="left:1661.1px;top:237.1px;width:15.7px;height:15.7px;border:1.2px solid #333;background:#fff"></div><svg class="a" style="left:1661.1px;top:237.1px" width="16" height="16"><path d="M3.3,8 L6.3,11 L12.3,4.6" stroke="#444" stroke-width="1.3" fill="none"/></svg><div class="t" style="left:1682.5px;top:260.2px;font-size:14.5px;line-height:14.5px;letter-spacing:0.00px">Y</div><div class="a" style="left:1661.1px;top:259.0px;width:15.7px;height:15.7px;border:1.2px solid #333;background:#fff"></div><svg class="a" style="left:1661.1px;top:259.0px" width="16" height="16"><path d="M3.3,8 L6.3,11 L12.3,4.6" stroke="#444" stroke-width="1.3" fill="none"/></svg><div class="t" style="left:1682.5px;top:282.1px;font-size:14.5px;line-height:14.5px;letter-spacing:0.00px">Z</div><div class="a" style="left:1661.1px;top:280.9px;width:15.7px;height:15.7px;border:1.2px solid #333;background:#fff"></div><svg class="a" style="left:1661.1px;top:280.9px" width="16" height="16"><path d="M3.3,8 L6.3,11 L12.3,4.6" stroke="#444" stroke-width="1.3" fill="none"/></svg><div class="box" style="left:1632px;top:414px;width:286px;height:142px"></div><div class="a" style="left:1715px;top:416px;width:1px;height:29px;background:#e5e5e5"></div><div class="t" style="left:1637.5px;top:423.6px;font-size:14.5px;line-height:14.5px;letter-spacing:0.08px">Parameter</div><div class="t" style="left:1720.1px;top:423.6px;font-size:14.5px;line-height:14.5px;letter-spacing:-0.07px">Value</div><div class="a" style="left:1634px;top:446px;width:283px;height:22px;background:#f5f5f5"></div><div class="a" style="left:1634px;top:490px;width:283px;height:22px;background:#f5f5f5"></div><div class="t" style="left:1660.3px;top:450.8px;font-size:14.5px;line-height:14.5px;letter-spacing:0.48px">Name</div><div class="t" style="left:1660.3px;top:472.6px;font-size:14.5px;line-height:14.5px;letter-spacing:0.54px">Color</div><div class="t" style="left:1660.3px;top:494.5px;font-size:14.5px;line-height:14.5px;letter-spacing:0.55px">Alpha</div><div class="t" style="left:1660.3px;top:516.2px;font-size:14.5px;line-height:14.5px;letter-spacing:0.27px">Visible</div><div class="t" style="left:1715.6px;top:450.8px;font-size:14.5px;line-height:14.5px;letter-spacing:-0.04px">3140646685160</div><div class="a" style="left:1722px;top:474px;width:168px;height:11px;background:#f5a623;border:1.2px solid #000"></div><div class="t" style="left:1715.6px;top:494.5px;font-size:14.5px;line-height:14.5px;letter-spacing:0.00px">0</div><div class="a" style="left:1716.1px;top:515.3px;width:15.7px;height:15.7px;border:1.2px solid #333;background:#fff"></div><svg class="a" style="left:1716.1px;top:515.3px" width="16" height="16"><path d="M3.3,8 L6.3,11 L12.3,4.6" stroke="#444" stroke-width="1.3" fill="none"/></svg><div class="a" style="left:1898px;top:448.2px;width:17.5px;height:17.5px;background:#e2e2e2;border:1px solid #c4c4c4"></div><svg class="a" style="left:1898px;top:448.2px" width="18" height="18"><path d="M6,6.2 Q13.5,3.5 15.5,9 Q16,13 12.5,14.5" stroke="#e2b81c" stroke-width="3.2" fill="none"/><path d="M1.8,6.5 L8,3 L8.5,10.5 Z" fill="#e2b81c"/></svg><div class="a" style="left:1898px;top:470.2px;width:17.5px;height:17.5px;background:#e2e2e2;border:1px solid #c4c4c4"></div><svg class="a" style="left:1898px;top:470.2px" width="18" height="18"><path d="M6,6.2 Q13.5,3.5 15.5,9 Q16,13 12.5,14.5" stroke="#e2b81c" stroke-width="3.2" fill="none"/><path d="M1.8,6.5 L8,3 L8.5,10.5 Z" fill="#e2b81c"/></svg><div class="a" style="left:1898px;top:492.2px;width:17.5px;height:17.5px;background:#d0d0d0;border:1px solid #c4c4c4"></div><svg class="a" style="left:1898px;top:492.2px" width="18" height="18"><path d="M6,6.2 Q13.5,3.5 15.5,9 Q16,13 12.5,14.5" stroke="#e8e8e8" stroke-width="3.2" fill="none"/><path d="M1.8,6.5 L8,3 L8.5,10.5 Z" fill="#e8e8e8"/></svg><div class="a" style="left:1898px;top:514.2px;width:17.5px;height:17.5px;background:#d0d0d0;border:1px solid #c4c4c4"></div><svg class="a" style="left:1898px;top:514.2px" width="18" height="18"><path d="M6,6.2 Q13.5,3.5 15.5,9 Q16,13 12.5,14.5" stroke="#e8e8e8" stroke-width="3.2" fill="none"/><path d="M1.8,6.5 L8,3 L8.5,10.5 Z" fill="#e8e8e8"/></svg><div class="dt" style="left:1630px;top:564px;width:290px;height:23px"></div><div class="t" style="left:1634.6px;top:570.0px;font-size:13px;line-height:13px;letter-spacing:0.02px">Variables</div><svg class="a" style="left:1890px;top:570.5px" width="9" height="10"><rect x="2.6" y="0.6" width="5.6" height="5.4" fill="none" stroke="#000" stroke-width="1.2"/><rect x="2" y="0" width="6.8" height="2" fill="#000"/><rect x="0.6" y="3.9" width="5.6" height="5.4" fill="#dadada" stroke="#000" stroke-width="1.2"/><rect x="0" y="3.3" width="6.8" height="2" fill="#000"/></svg><svg class="a" style="left:1906.6px;top:571.6px" width="9" height="8"><path d="M0.8,0.6 L7.8,7 M7.8,0.6 L0.8,7" stroke="#000" stroke-width="1.9"/></svg><div class="box" style="left:1630px;top:589px;width:290px;height:221px"></div><div class="a" style="left:1631px;top:590px;width:268px;height:198px;overflow:hidden"><div class="a" style="left:124.6px;top:0;width:1px;height:198px;background:#dcdcdc"></div><div class="a" style="left:249.4px;top:0;width:1px;height:198px;background:#dcdcdc"></div><div class="a" style="left:0;top:66.4px;width:268px;height:1px;background:#dcdcdc"></div><div class="a" style="left:0;top:103.4px;width:268px;height:1px;background:#dcdcdc"></div><div class="a" style="left:0;top:140.2px;width:268px;height:1px;background:#dcdcdc"></div><div class="a" style="left:0;top:177.5px;width:268px;height:1px;background:#dcdcdc"></div></div><div class="t" style="left:1672.7px;top:598.7px;font-size:14.5px;line-height:14.5px;letter-spacing:0.51px">Name</div><div class="t" style="left:1803.1px;top:598.7px;font-size:14.5px;line-height:14.5px;letter-spacing:-0.61px">Type</div><div class="a" style="left:1631px;top:590px;width:268px;height:198px;overflow:hidden"><div class="t" style="left:2.5px;top:41.1px;font-size:14.5px;line-height:14.5px;letter-spacing:0.18px">show_object</div><div class="t" style="left:127.9px;top:41.1px;font-size:14.5px;line-height:14.5px;letter-spacing:0.00px">function</div><div class="a" style="left:253.5px;top:0;width:13.5px;height:198px;overflow:hidden"><div class="t" style="left:0.1px;top:41.1px;font-size:14.5px;line-height:14.5px;letter-spacing:0.00px">&lt;f</div></div><div class="t" style="left:2.5px;top:77.9px;font-size:14.5px;line-height:14.5px;letter-spacing:0.00px">debug</div><div class="t" style="left:127.9px;top:77.9px;font-size:14.5px;line-height:14.5px;letter-spacing:0.00px">function</div><div class="a" style="left:253.5px;top:0;width:13.5px;height:198px;overflow:hidden"><div class="t" style="left:0.1px;top:77.9px;font-size:14.5px;line-height:14.5px;letter-spacing:0.00px">&lt;f</div></div><div class="t" style="left:2.5px;top:115.1px;font-size:14.5px;line-height:14.5px;letter-spacing:0.00px">cq</div><div class="t" style="left:127.9px;top:115.1px;font-size:14.5px;line-height:14.5px;letter-spacing:0.00px">module</div><div class="a" style="left:253.5px;top:0;width:13.5px;height:198px;overflow:hidden"><div class="t" style="left:0.1px;top:115.1px;font-size:14.5px;line-height:14.5px;letter-spacing:0.00px">&lt;r</div></div><div class="t" style="left:2.5px;top:151.9px;font-size:14.5px;line-height:14.5px;letter-spacing:0.00px">sr_OD</div><div class="t" style="left:127.9px;top:151.9px;font-size:14.5px;line-height:14.5px;letter-spacing:0.00px">int</div><div class="a" style="left:253.5px;top:0;width:13.5px;height:198px;overflow:hidden"><div class="t" style="left:0.1px;top:151.9px;font-size:14.5px;line-height:14.5px;letter-spacing:0.00px">12</div></div><div class="t" style="left:2.5px;top:188.9px;font-size:14.5px;line-height:14.5px;letter-spacing:0.00px">sr_lenght</div><div class="t" style="left:127.9px;top:188.9px;font-size:14.5px;line-height:14.5px;letter-spacing:0.00px">int</div><div class="a" style="left:253.5px;top:0;width:13.5px;height:198px;overflow:hidden"><div class="t" style="left:0.1px;top:188.9px;font-size:14.5px;line-height:14.5px;letter-spacing:0.00px">13</div></div></div><div class="a" style="left:1631px;top:788.5px;width:268px;height:19.5px;background:#f0f0f0"></div><div class="a" style="left:1652px;top:788.5px;width:150px;height:19.5px;background:#cdcdcd"></div><div class="a" style="left:1899px;top:590px;width:19px;height:218px;background:#f0f0f0"></div><div class="a" style="left:1900px;top:611.4px;width:17px;height:28px;background:#cdcdcd"></div><div class="dt" style="left:0px;top:816px;width:705px;height:23px"></div><div class="t" style="left:4.6px;top:822.0px;font-size:13px;line-height:13px;letter-spacing:-0.37px">Console</div><svg class="a" style="left:675px;top:822.5px" width="9" height="10"><rect x="2.6" y="0.6" width="5.6" height="5.4" fill="none" stroke="#000" stroke-width="1.2"/><rect x="2" y="0" width="6.8" height="2" fill="#000"/><rect x="0.6" y="3.9" width="5.6" height="5.4" fill="#dadada" stroke="#000" stroke-width="1.2"/><rect x="0" y="3.3" width="6.8" height="2" fill="#000"/></svg><svg class="a" style="left:691.6px;top:823.6px" width="9" height="8"><path d="M0.8,0.6 L7.8,7 M7.8,0.6 L0.8,7" stroke="#000" stroke-width="1.9"/></svg><div class="box" style="left:0;top:841px;width:705px;height:164px;border-color:#747474"></div><div class="t" style="left:5px;top:864.9px;font-family:'Liberation Mono',monospace;font-size:12.2px;line-height:13px;letter-spacing:-0.35px;color:#000080">In [<b>1</b>]:</div><div class="a" style="left:684px;top:842px;width:19.5px;height:162px;background:#f0f0f0"></div><div class="a" style="left:684.5px;top:863.7px;width:18.5px;height:95.7px;background:#cdcdcd"></div><div class="dt" style="left:710px;top:816px;width:623px;height:23px"></div><div class="t" style="left:714.6px;top:822.0px;font-size:13px;line-height:13px;letter-spacing:0.01px">Current traceback</div><svg class="a" style="left:1303px;top:822.5px" width="9" height="10"><rect x="2.6" y="0.6" width="5.6" height="5.4" fill="none" stroke="#000" stroke-width="1.2"/><rect x="2" y="0" width="6.8" height="2" fill="#000"/><rect x="0.6" y="3.9" width="5.6" height="5.4" fill="#dadada" stroke="#000" stroke-width="1.2"/><rect x="0" y="3.3" width="6.8" height="2" fill="#000"/></svg><svg class="a" style="left:1319.6px;top:823.6px" width="9" height="8"><path d="M0.8,0.6 L7.8,7 M7.8,0.6 L0.8,7" stroke="#000" stroke-width="1.9"/></svg><div class="box" style="left:712px;top:859px;width:619px;height:144px"></div><div class="a" style="left:837px;top:860px;width:1px;height:30px;background:#e5e5e5"></div><div class="a" style="left:962px;top:860px;width:1px;height:30px;background:#e5e5e5"></div><div class="a" style="left:1329px;top:860px;width:1px;height:30px;background:#e5e5e5"></div><div class="t" style="left:717.1px;top:869.4px;font-size:14.5px;line-height:14.5px;letter-spacing:0.31px">File</div><div class="t" style="left:842.4px;top:869.4px;font-size:14.5px;line-height:14.5px;letter-spacing:0.13px">Line</div><div class="t" style="left:967.4px;top:869.4px;font-size:14.5px;line-height:14.5px;letter-spacing:0.38px">Code</div><div class="dt" style="left:1338px;top:816px;width:582px;height:23px"></div><div class="t" style="left:1342.6px;top:822.0px;font-size:13px;line-height:13px;letter-spacing:-0.13px">CQ object inspector</div><svg class="a" style="left:1890px;top:822.5px" width="9" height="10"><rect x="2.6" y="0.6" width="5.6" height="5.4" fill="none" stroke="#000" stroke-width="1.2"/><rect x="2" y="0" width="6.8" height="2" fill="#000"/><rect x="0.6" y="3.9" width="5.6" height="5.4" fill="#dadada" stroke="#000" stroke-width="1.2"/><rect x="0" y="3.3" width="6.8" height="2" fill="#000"/></svg><svg class="a" style="left:1906.6px;top:823.6px" width="9" height="8"><path d="M0.8,0.6 L7.8,7 M7.8,0.6 L0.8,7" stroke="#000" stroke-width="1.9"/></svg><div class="box" style="left:1338px;top:841px;width:582px;height:140px"></div><div class="a" style="left:1463.5px;top:842px;width:1px;height:29.5px;background:#e5e5e5"></div><div class="t" style="left:1343.9px;top:851.5px;font-size:14.5px;line-height:14.5px;letter-spacing:-0.31px">Type</div><div class="t" style="left:1468.9px;top:851.5px;font-size:14.5px;line-height:14.5px;letter-spacing:-0.07px">Value</div><div class="a" style="left:1339px;top:872px;width:560px;height:108px;overflow:hidden"><div class="t" style="left:27.6px;top:5.0px;font-size:14.5px;line-height:14.5px;letter-spacing:-0.24px">Vector: (0.0, ...</div><div class="t" style="left:27.6px;top:27.0px;font-size:14.5px;line-height:14.5px;letter-spacing:-0.24px">Vector: (0.0, ...</div><div class="t" style="left:27.6px;top:49.0px;font-size:14.5px;line-height:14.5px;letter-spacing:-0.24px">Vector: (0.0, ...</div><div class="t" style="left:27.6px;top:71.0px;font-size:14.5px;line-height:14.5px;letter-spacing:-0.24px">Vector: (0.0, ...</div><div class="t" style="left:27.6px;top:93.0px;font-size:14.5px;line-height:14.5px;letter-spacing:-0.24px">Vector: (0.0, ...</div></div><div class="a" style="left:1899px;top:842px;width:19.5px;height:138px;background:#f0f0f0"></div><div class="a" style="left:1900px;top:862.9px;width:17.5px;height:54px;background:#cdcdcd"></div><div class="a" style="left:1338.6px;top:980px;width:143px;height:24px;background:#fff;border:1px solid #d9d9d9;border-top:none"></div><div class="t" style="left:1352.2px;top:987.0px;font-size:13px;line-height:13px;letter-spacing:-0.08px">CQ object inspector</div><div class="a" style="left:1481px;top:1002.2px;width:89px;height:1px;background:#d9d9d9"></div><div class="t" style="left:1494.5px;top:985.8px;font-size:13px;line-height:13px;letter-spacing:-0.02px">Log viewer</div><svg class="a" style="left:685px;top:95px" width="940" height="715" viewBox="685 95 940 715"><defs>
<linearGradient id="bg" x1="0" y1="0" x2="0" y2="1"><stop offset="0" stop-color="#cfd6de"/><stop offset="0.5" stop-color="#a9adb2"/><stop offset="1" stop-color="#7f7f7f"/></linearGradient>
<radialGradient id="dimple" cx="0.52" cy="0.55" r="0.58"><stop offset="0" stop-color="#fffbd0"/><stop offset="0.12" stop-color="#fff07a"/><stop offset="0.32" stop-color="#fdca30"/><stop offset="0.72" stop-color="#f3ab25"/><stop offset="0.92" stop-color="#cc8c1c"/><stop offset="1" stop-color="#a06814"/></radialGradient>
<linearGradient id="cylL" x1="0" y1="0" x2="1" y2="0.4"><stop offset="0" stop-color="#cf8c1c"/><stop offset="0.5" stop-color="#f9b828"/><stop offset="1" stop-color="#eaa323"/></linearGradient>
<linearGradient id="grv" x1="0" y1="0" x2="1" y2="0.5"><stop offset="0" stop-color="#f3ad26"/><stop offset="0.6" stop-color="#fcbf2c"/><stop offset="1" stop-color="#f0a824"/></linearGradient>
<linearGradient id="grvD" x1="0" y1="1" x2="0.3" y2="0"><stop offset="0" stop-color="#b87814"/><stop offset="0.4" stop-color="#f2ad26"/><stop offset="1" stop-color="#fbbd2c"/></linearGradient>
<linearGradient id="fil" gradientUnits="userSpaceOnUse" x1="958" y1="262" x2="1002" y2="280"><stop offset="0" stop-color="#9a6412"/><stop offset="0.45" stop-color="#e29c20"/><stop offset="1" stop-color="#f8b82a"/></linearGradient>
<radialGradient id="hl" gradientUnits="userSpaceOnUse" cx="1018" cy="272" r="40" gradientTransform="translate(1018 272) scale(0.75 1.35) translate(-1018 -272)"><stop offset="0" stop-color="#fffda8"/><stop offset="0.3" stop-color="#fee45a"/><stop offset="0.65" stop-color="#fbbf2c"/><stop offset="1" stop-color="#eea524"/></radialGradient>
<linearGradient id="darkw" x1="0.6" y1="0" x2="0.4" y2="1"><stop offset="0" stop-color="#7a5212"/><stop offset="0.55" stop-color="#865a14"/><stop offset="1" stop-color="#a87318"/></linearGradient>
<linearGradient id="floor" x1="0" y1="0" x2="1" y2="1"><stop offset="0" stop-color="#cc8b1e"/><stop offset="1" stop-color="#d99a22"/></linearGradient>
<linearGradient id="filR" gradientUnits="userSpaceOnUse" x1="1290" y1="340" x2="1316" y2="345"><stop offset="0" stop-color="#d08e1c"/><stop offset="0.6" stop-color="#fcc22e"/><stop offset="1" stop-color="#f0aa26"/></linearGradient>
<linearGradient id="filR2" gradientUnits="userSpaceOnUse" x1="1265" y1="395" x2="1290" y2="410"><stop offset="0" stop-color="#b87a16"/><stop offset="0.6" stop-color="#f7b628"/><stop offset="1" stop-color="#eaa524"/></linearGradient>
<linearGradient id="endR" gradientUnits="userSpaceOnUse" x1="1440" y1="360" x2="1465" y2="360"><stop offset="0" stop-color="#c4841a"/><stop offset="0.8" stop-color="#e7a424"/><stop offset="1" stop-color="#f4b428"/></linearGradient>
<linearGradient id="g1" x1="0.3" y1="0" x2="0" y2="1"><stop offset="0" stop-color="#eea524"/><stop offset="0.45" stop-color="#fcc12c"/><stop offset="0.8" stop-color="#e9a323"/><stop offset="1" stop-color="#9c6614"/></linearGradient><linearGradient id="grvR" x1="0" y1="0" x2="0.2" y2="1"><stop offset="0" stop-color="#f5b126"/><stop offset="0.5" stop-color="#fcc02c"/><stop offset="0.85" stop-color="#eaa423"/><stop offset="1" stop-color="#9c6614"/></linearGradient></defs><rect x="685" y="95" width="940" height="715" fill="url(#bg)"/><path d="M1266,231.7 L1269.5,319.3 L1029.5,667.4 L1026,579.8 Z" fill="#8c5f17" stroke="#140e03" stroke-width="1.15" stroke-linejoin="round" /><path d="M698.3,477.3 L1026,579.8 L1029.5,667.4 L701.8,564.7 Z" fill="#d9961f" stroke="#140e03" stroke-width="1.15" stroke-linejoin="round" /><path d="M938.6,129.1 L1266,231.7 L1026,579.8 L698.3,477.3 Z" fill="#e6a122" stroke="#140e03" stroke-width="1.15" stroke-linejoin="round" /><path d="M886.2,203 C886,212 885,219 883.5,226 C881.5,236 877,243 872.3,248.6 L855,248 L884,203 Z" fill="#c1c7ce"  /><path d="M885.5,205.6 L911.2,215.5 L918.5,205.3 L959.2,217.7 L946.1,238.1 L973.3,245.8 C972,256 969,264 966.5,267.6 C964,270.5 962,270 960.4,266.9 L933,257.7 L919.9,276 L879.1,263.6 L885,253 L872.3,248.6 C877,243 881,236 883,226 C884.5,218 885.3,212 885.5,205.6 Z" fill="url(#grv)" stroke="#140e03" stroke-width="1.15" stroke-linejoin="round" /><path d="M885.5,205.6 L911.2,215.5 C910,238 903,256 893,262 C890,264 887,262 885.5,255 L885,253 L872.3,248.6 C877,243 881,236 883,226 C884.5,218 885.3,212 885.5,205.6 Z" fill="url(#g1)" stroke="#140e03" stroke-width="1.15" stroke-linejoin="round" /><path d="M911.2,215.5 L918.5,205.3 C917,232 909,256 898.8,269.4 L879.1,263.6 L885,253 C887,262 890,264 893,262 C903,256 910,238 911.2,215.5 Z" fill="#8a5a14" stroke="#140e03" stroke-width="1.15" stroke-linejoin="round" /><path d="M946.1,238.1 C941,246 937,252 933,257.7" fill="none" stroke="#140e03" stroke-width="1.15" stroke-linejoin="round"/><path d="M911.2,215.5 L918.5,205.3" fill="none" stroke="#140e03" stroke-width="1.15" stroke-linejoin="round"/><path d="M973.3,245.8 L985.6,229.5 C990,224 1000,218 1012.1,216.6 L1062.3,215.4 L1170.7,249.5 C1176,252 1179,255 1178.9,257.7 L1172.8,271.3 L1169.4,276 L1210.8,288.3 L1207.4,293.7 L1220.3,297.1 C1220,315 1213,332 1202.7,340 L1196.6,330.4 L1183.6,327.7 L1179.6,331.8 L1138.8,319.5 L1110.2,359.6 C1103,366 1098,367 1093.8,366 L1068.4,359 L1055.3,368.6 L989,348.5 L977.4,328.1 L973.3,323.3 L950.9,302.9 C946,298 945,290 948.2,283.9 L960.4,266.9 C962,270 964,270.5 966.5,267.6 C969,264 972,256 973.3,245.8 Z" fill="#f4b026" stroke="#140e03" stroke-width="1.15" stroke-linejoin="round" /><path d="M973.3,245.8 L985.6,229.5 C985,240 984,246 983.5,250 C981,258 979,264 976.7,270.3 C973,279 970,285 967.2,289.3 C963,294 960,296.5 956.3,296.1 C952,295 950,291.5 949.5,288 L948.2,283.9 L960.4,266.9 C962,270 964,270.5 966.5,267.6 C969,264 972,256 973.3,245.8 Z" fill="#8a5a14"  /><path d="M985.6,229.5 C985,240 984,246 983.5,250 C981,258 979,264 976.7,270.3 C973,279 970,285 967.2,289.3 C963,294 960,296.5 956.3,296.1 C952,295 950,291.5 949.5,288" fill="none" stroke="#140e03" stroke-width="1.15" stroke-linejoin="round"/><path d="M985.6,229.5 C990,224 1000,218 1012.1,216.6 C1011,240 1004,280 973.3,322 L950.9,302.9 C946,298 945,290 948.2,283.9 L949.5,288 C950,291.5 952,295 956.3,296.1 C960,296.5 963,294 967.2,289.3 C970,285 973,279 976.7,270.3 C979,264 981,258 983.5,250 C984,246 985,240 985.6,229.5 Z" fill="url(#fil)"  /><path d="M1012.1,216.6 L1061,214.8 C1045,225 1033,240 1031.1,256.7 C1030,272 1036,288 1044.7,300.2 C1025,305 1008,314 999.8,327.4 L998.5,345 L989,348.5 L977.4,328.1 L973.3,322 C1004,280 1011,240 1012.1,216.6 Z" fill="url(#hl)" stroke="#140e03" stroke-width="1.15" stroke-linejoin="round" /><path d="M973.3,245.8 L985.6,229.5 C990,224 1000,218 1012.1,216.6 L1062.3,215.4" fill="none" stroke="#140e03" stroke-width="1.15" stroke-linejoin="round"/><path d="M960.4,266.9 L948.2,283.9 C945,290 946,298 950.9,302.9 L973.3,323.3 L977.4,328.1" fill="none" stroke="#140e03" stroke-width="1.15" stroke-linejoin="round"/><path d="M1043.6,301.2 L1132,328.4 L1110.2,359.6 C1106,365 1101,367 1096.6,366.4 L1068.1,358.3 L1055.8,369.2 L999.8,351 C997,340 998,332 1002,325 C1010,313 1025,305 1043.6,301.2 Z" fill="#e7a323" stroke="#140e03" stroke-width="1.15" stroke-linejoin="round" /><path d="M1062.3,215.4 L1170.7,249.5 L1156.4,319.5 L1155,324.4 L1138.8,319.5 L1132,328.4 L1043.6,301.2 C1036,288 1030,272 1030.9,255.9 C1035,238 1048,225 1062.3,215.4 Z" fill="#fcbd2a" stroke="#140e03" stroke-width="1.15" stroke-linejoin="round" /><path d="M1170.7,249.5 C1176,252 1179,255 1178.9,257.7 C1178,262 1175,268 1172.8,271.3 L1169.4,276 C1166,295 1160,312 1155,323 L1156.4,319.5 Z" fill="#f0aa26" stroke="#140e03" stroke-width="1.15" stroke-linejoin="round" /><path d="M1169.4,276 L1210.8,288.3 L1207.4,293.7 L1220.3,297.1 C1220,315 1213,332 1202.7,340 L1196.6,330.4 L1183.6,327.7 L1179.6,331.8 L1155,324.4 C1160,312 1166,295 1169.4,276 Z" fill="url(#grv)" stroke="#140e03" stroke-width="1.15" stroke-linejoin="round" /><path d="M1155,324.4 L1179.6,331.8 L1183.6,327.7 L1196.6,330.4 L1202.7,340 C1195,332 1175,326 1155,324.4 Z" fill="#c98a1c"  /><path d="M1207.4,293.7 C1206,310 1203,322 1197.2,329.7" fill="none" stroke="#140e03" stroke-width="1.15" stroke-linejoin="round"/><path d="M1220.3,297.1 C1220,315 1213,332 1202.7,340 L1196.6,330.4 L1183.6,327.7 L1179.6,331.8 L1138.8,319.5" fill="none" stroke="#140e03" stroke-width="1.15" stroke-linejoin="round"/><path d="M976.6,329.3 L989.7,349 L909.8,495.7 C907,492 904.5,488 903.2,483.9 Z" fill="url(#darkw)" stroke="#140e03" stroke-width="1.15" stroke-linejoin="round" /><path d="M989.7,349 L1056.5,368.6 L934.6,505.9 C920,504 913,499 909.8,495.7 Z" fill="url(#floor)" stroke="#140e03" stroke-width="1.15" stroke-linejoin="round" /><path d="M903.1,484.3 C907,494 917,503 934.6,505.9 L907.6,546.8 C905,556 890,558 880,550 C873,545 870,538 870.3,531 Z" fill="url(#cylL)" stroke="#140e03" stroke-width="1.15" stroke-linejoin="round" /><ellipse cx="859.9" cy="363.5" rx="39.6" ry="27.6" fill="url(#dimple)" stroke="#140e03" stroke-width="1.15" stroke-linejoin="round"/><path d="M823.5,353.8 C829.9,371.5 841.9,383.5 855.1999999999999,390.0" fill="none" stroke="#140e03" stroke-width="1.15" stroke-linejoin="round"/><path d="M877.4,340.3 C875.9,358.5 869.9,375.5 862.4,390.3" fill="none" stroke="#140e03" stroke-width="1.15" stroke-linejoin="round"/><ellipse cx="1011" cy="505.2" rx="39.6" ry="27.6" fill="url(#dimple)" stroke="#140e03" stroke-width="1.15" stroke-linejoin="round"/><path d="M974.6,495.5 C981,513.2 993,525.2 1006.3,531.7" fill="none" stroke="#140e03" stroke-width="1.15" stroke-linejoin="round"/><path d="M1028.5,482.0 C1027,500.2 1021,517.2 1013.5,532.0" fill="none" stroke="#140e03" stroke-width="1.15" stroke-linejoin="round"/><path d="M1607.6,339.4 L1612.3,426.3 L1371.6,775.5 L1367.6,687.6 Z" fill="#8c5f17" stroke="#140e03" stroke-width="1.15" stroke-linejoin="round" /><path d="M1039.5,584.5 L1367.6,687.6 L1371.6,775.5 L1043.5,673 Z" fill="#d9961f" stroke="#140e03" stroke-width="1.15" stroke-linejoin="round" /><path d="M1279.6,236.6 L1607.6,339.4 L1367.6,687.6 L1039.5,584.5 Z" fill="#e6a122" stroke="#140e03" stroke-width="1.15" stroke-linejoin="round" /><path d="M1234.3,301.4 L1248.3,305.5 L1251.6,301.4 L1292.1,313.8 C1290,336 1282,358 1268,368.2 C1265,367.5 1263,363 1261.3,359.1 L1237.6,347.6 L1233.5,347.6 L1222.7,345.1 C1227,334 1231,320 1234.3,301.4 Z" fill="url(#grvR)" stroke="#140e03" stroke-width="1.15" stroke-linejoin="round" /><path d="M1248.3,305.5 C1246,325 1240,340 1233.5,347.6 L1237.6,347.6 C1245,338 1250,322 1251.6,301.4 Z" fill="#8a5a14" stroke="#140e03" stroke-width="1.15" stroke-linejoin="round" /><path d="M1292.1,313.8 L1298.7,305.5 C1303,299 1310,296 1318.5,295.6 L1430.3,330.9 L1458,355 C1465,361 1468,368 1465,375 L1452,396.1 C1448,402 1446,410 1445.1,417.1 L1437.3,417.1 L1418.6,439.6 C1410,444 1404,445 1399.5,445 L1357.6,447.8 L1344.7,458.9 L1276.5,438.6 L1267.2,422 L1262.4,417 L1249.2,414.5 C1242,412 1235,406 1233.5,402.1 L1236,398.8 L1261.3,359.1 C1263,363 1265,367.5 1268,368.2 C1282,358 1290,336 1292.1,313.8 Z" fill="#e7a323" stroke="#140e03" stroke-width="1.15" stroke-linejoin="round" /><path d="M1292.1,313.8 L1298.7,305.5 L1287.2,372.4 L1257.4,415.3 L1249.2,414.5 C1242,412 1235,406 1233.5,402.1 L1236,398.8 L1261.3,359.1 C1263,363 1265,367.5 1268,368.2 C1282,358 1290,336 1292.1,313.8 Z" fill="#8a5a14" stroke="#140e03" stroke-width="1.15" stroke-linejoin="round" /><path d="M1233.5,402.1 C1238,410 1243,413 1249.2,414.5 L1257.4,415.3 L1262.4,417 C1252,410 1242,405 1236,398.8 Z" fill="#b57816"  /><path d="M1298.7,305.5 C1303,299 1310,296 1318.5,295.6 L1318.5,303 L1303.7,382.3 C1297,381 1291,378 1287.2,372.4 Z" fill="url(#filR)" stroke="#140e03" stroke-width="1.15" stroke-linejoin="round" /><path d="M1287.2,372.4 C1291,378 1297,381 1303.7,382.3 L1272.3,428.5 L1262.4,417 L1257.4,415.3 Z" fill="url(#filR2)" stroke="#140e03" stroke-width="1.15" stroke-linejoin="round" /><path d="M1318.5,295.6 L1430.3,330.9 C1436,338 1442,352 1445.1,371.3 C1444,382 1441,390 1438.8,394.6 C1432,403 1422,410 1413.2,415.6 L1303.7,382.3 Z" fill="#fcbd2a" stroke="#140e03" stroke-width="1.15" stroke-linejoin="round" /><path d="M1430.3,330.9 L1458,355 C1465,361 1468,368 1465,375 L1452,396.1 C1448,402 1446,410 1445.1,417.1 L1437.3,417.1 L1418.6,439.6 L1413.2,415.6 C1422,410 1432,403 1438.8,394.6 C1441,390 1444,382 1445.1,371.3 C1442,352 1436,338 1430.3,330.9 Z" fill="url(#endR)" stroke="#140e03" stroke-width="1.15" stroke-linejoin="round" /><path d="M1460.6,358.1 C1458,372 1456,384 1452,396.1" fill="none" stroke="#140e03" stroke-width="1.15" stroke-linejoin="round"/><path d="M1413.2,415.6 C1416,425 1418,432 1418.6,439.6" fill="none" stroke="#140e03" stroke-width="1.15" stroke-linejoin="round"/><path d="M1452,396.1 L1479.2,404.7 C1476,414 1472,421 1466.8,425.7 L1445.1,417.1 C1446,410 1448,402 1452,396.1 Z" fill="url(#grv)" stroke="#140e03" stroke-width="1.15" stroke-linejoin="round" /><path d="M1479.2,404.7 L1492.4,386 C1490,410 1483,432 1473,449 L1452.8,444.3 L1465.3,427.2 C1471,423 1476,414 1479.2,404.7 Z" fill="#8a5a14" stroke="#140e03" stroke-width="1.15" stroke-linejoin="round" /><path d="M1437.3,417.1 L1466.8,425.7" fill="none" stroke="#140e03" stroke-width="1.15" stroke-linejoin="round"/><path d="M1492.4,386 L1533.6,398.5 L1527.4,409.3 L1554.6,416.3 C1554,432 1548,450 1532.1,466 L1525.9,456.7 L1501,447.4 L1493.2,456.7 L1473,449 C1483,432 1490,410 1492.4,386 Z" fill="url(#grvD)" stroke="#140e03" stroke-width="1.15" stroke-linejoin="round" /><path d="M1527.4,409.3 C1524,425 1518,442 1508,452" fill="none" stroke="#140e03" stroke-width="1.15" stroke-linejoin="round"/><path d="M1554.6,416.3 L1557,413 L1560,430 L1536,470 L1532.1,466 C1548,450 1554,432 1554.6,416.3 Z" fill="#8c5f17"  /><path d="M1554.6,416.3 C1554,432 1548,450 1532.1,466" fill="none" stroke="#140e03" stroke-width="1.15" stroke-linejoin="round"/><path d="M1267.2,422 L1276.5,438.6 L1199,584.3 C1196,581 1193,578 1191.6,575 Z" fill="url(#darkw)" stroke="#140e03" stroke-width="1.15" stroke-linejoin="round" /><path d="M1276.5,438.6 L1344.7,458.9 L1219.3,595.3 C1210,594 1203,589 1199,584.3 Z" fill="url(#floor)" stroke="#140e03" stroke-width="1.15" stroke-linejoin="round" /><path d="M1191.6,575 C1196,585 1206,594 1219.3,595.3 L1195.3,635.9 C1193,645 1180,647 1170,641 C1162,636 1157,628 1156.6,619.3 Z" fill="url(#cylL)" stroke="#140e03" stroke-width="1.15" stroke-linejoin="round" /><ellipse cx="1134" cy="543.5" rx="39.6" ry="27.6" fill="url(#dimple)" stroke="#140e03" stroke-width="1.15" stroke-linejoin="round"/><path d="M1097.6,533.8 C1104,551.5 1116,563.5 1129.3,570.0" fill="none" stroke="#140e03" stroke-width="1.15" stroke-linejoin="round"/><path d="M1151.5,520.3 C1150,538.5 1144,555.5 1136.5,570.3" fill="none" stroke="#140e03" stroke-width="1.15" stroke-linejoin="round"/><ellipse cx="1392.6" cy="530.9" rx="39.6" ry="27.6" fill="url(#dimple)" stroke="#140e03" stroke-width="1.15" stroke-linejoin="round"/><path d="M1356.1999999999998,521.1999999999999 C1362.6,538.9 1374.6,550.9 1387.8999999999999,557.4" fill="none" stroke="#140e03" stroke-width="1.15" stroke-linejoin="round"/><path d="M1410.1,507.7 C1408.6,525.9 1402.6,542.9 1395.1,557.6999999999999" fill="none" stroke="#140e03" stroke-width="1.15" stroke-linejoin="round"/><path d="M1529.3,738.9 L1529.3,708" stroke="#c00000" stroke-width="3.5"/><path d="M1524.5,712 L1529.3,698.6 L1534,712 Z" fill="#e00000"/><path d="M1529.3,738.9 L1551,708" stroke="#0000b0" stroke-width="3"/><path d="M1545,706 L1555.6,702 L1553,713 Z" fill="#0000e0"/><path d="M1529.3,738.9 L1572,751" stroke="#00c000" stroke-width="3"/><path d="M1570,746 L1581,754.5 L1568,756 Z" fill="#00e000"/><circle cx="1529.3" cy="738.9" r="3.5" fill="#fff"/><text x="1525" y="696" font-family="Liberation Serif" font-size="11" fill="#222">X</text><text x="1558" y="701" font-family="Liberation Serif" font-size="11" fill="#222">Z</text><text x="1587" y="752" font-family="Liberation Serif" font-size="11" fill="#222">Y</text></svg><svg class="a" style="left:0;top:0" width="1920" height="1030"><path d="M663.5,136.0 L668.5,131.0 L673.5,136.0 M663.5,773.0 L668.5,778.0 L673.5,773.0 M14.0,793.0 L9.0,798 L14.0,803.0 M644.0,793.0 L649.0,798 L644.0,803.0 M1903.5,604.0 L1908.5,599.0 L1913.5,604.0 M1903.5,773.0 L1908.5,778.0 L1913.5,773.0 M1644.5,793.0 L1639.5,798 L1644.5,803.0 M1884.5,793.0 L1889.5,798 L1884.5,803.0 M688.8,855.5 L693.8,850.5 L698.8,855.5 M688.8,990.0 L693.8,995.0 L698.8,990.0 M1348.2,878.8 L1353.2,883.8 L1348.2,888.8 M1348.2,900.8 L1353.2,905.8 L1348.2,910.8 M1348.2,922.8 L1353.2,927.8 L1348.2,932.8 M1348.2,944.8 L1353.2,949.8 L1348.2,954.8 M1348.2,966.8 L1353.2,971.8 L1348.2,976.8 M1904.0,855.5 L1909,850.5 L1914.0,855.5 M1904.0,965.5 L1909,970.5 L1914.0,965.5" stroke="#5c5c5c" stroke-width="1.9" fill="none"/></svg></body></html>
